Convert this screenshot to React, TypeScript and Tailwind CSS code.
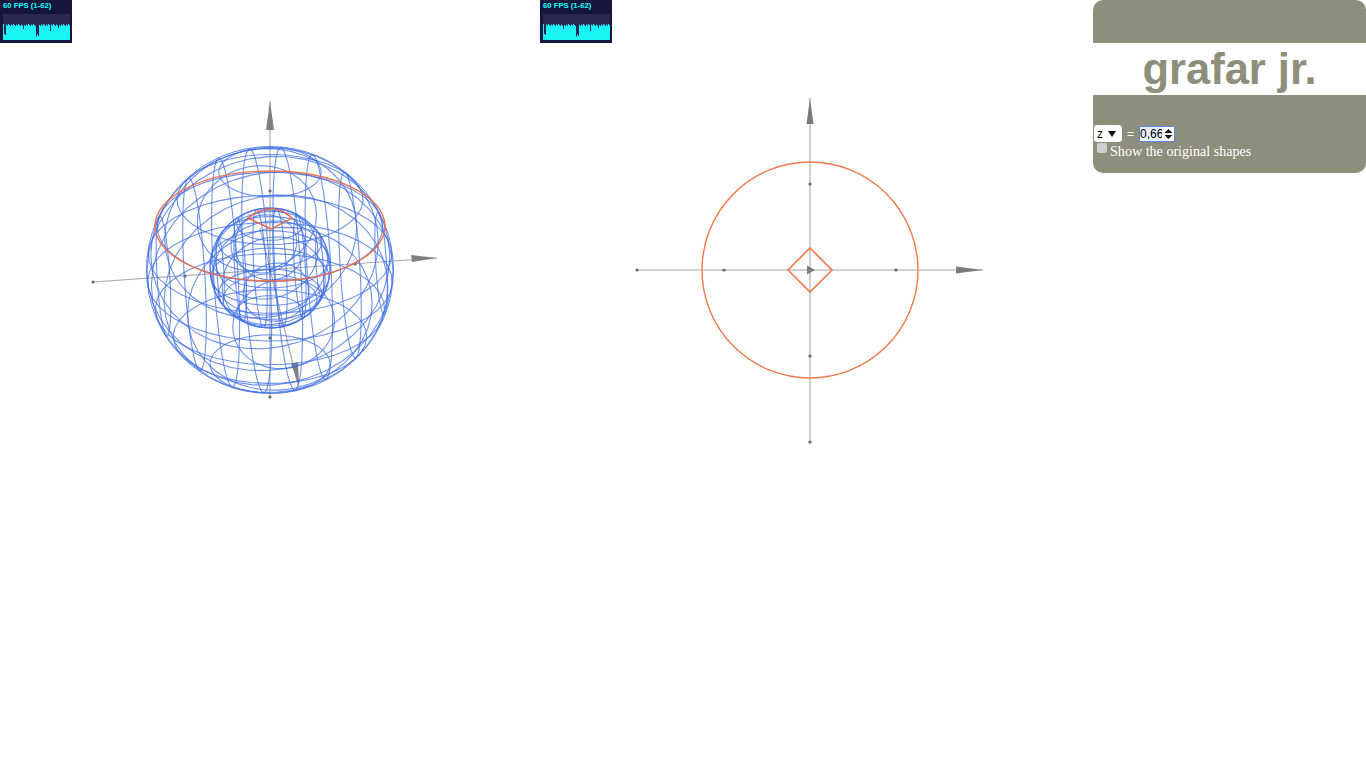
import React from "react";

const U = 87;
const A = (7 * Math.PI) / 180;
const E = (29 * Math.PI) / 180;

function proj(x: number, y: number, z: number): string {
  const sx = 270 + U * (x * Math.cos(A) + y * Math.sin(A));
  const sy = 270 + U * ((-x * Math.sin(A) + y * Math.cos(A)) * Math.sin(E) - z * Math.cos(E));
  return sx.toFixed(1) + " " + sy.toFixed(1);
}

function circle(fn: (a: number) => [number, number, number], n = 40): string {
  const pts: string[] = [];
  for (let i = 0; i <= n; i++) {
    const a = (i / n) * Math.PI * 2;
    const [x, y, z] = fn(a);
    pts.push(proj(x, y, z));
  }
  return "M" + pts.join("L");
}

function sphere(R: number, step: number): string[] {
  const out: string[] = [];
  for (let t = -R + step / 2; t < R; t += step) {
    const r = Math.sqrt(Math.max(R * R - t * t, 0));
    out.push(circle((a) => [t, r * Math.cos(a), r * Math.sin(a)]));
    out.push(circle((a) => [r * Math.cos(a), t, r * Math.sin(a)]));
    out.push(circle((a) => [r * Math.cos(a), r * Math.sin(a), t]));
  }
  return out;
}

const outer = sphere(Math.SQRT2, 0.36);
const inner = sphere(0.69, 0.23);

const bars = Array.from({ length: 67 }, (_, i) => {
  const dip =
    i === 33 || i === 35 ? 12 : i === 34 ? 9 : i === 20 || i === 47 ? 5 : i === 1 || i === 2 ? 9 : i === 55 ? 4 : 0;
  return 24 + dip + ((i * 7) % 5) * 0.5;
});

function Stats() {
  return (
    <div className="absolute left-0 top-0 h-[43px] w-[72px] bg-[#16163c] px-[3px] pt-[1px]">
      <div className="font-['Liberation_Sans',sans-serif] text-[7.7px] font-bold leading-[10px] text-[#1ff]">60 FPS (1-62)</div>
      <svg width="67" height="26" viewBox="0 14 67 26" className="mt-[3px] block bg-[#2a2850]">
        {bars.map((y, i) => (
          <rect key={i} x={i} y={y} width="1" height={40 - y} fill="#19f5f5" />
        ))}
      </svg>
    </div>
  );
}

function Dot({ x, y }: { x: number; y: number }) {
  return <circle cx={x} cy={y} r="1.6" fill="#666" />;
}

function View3D() {
  return (
    <svg width="540" height="540" viewBox="0 0 540 540" className="block">
      <g stroke="#aaa" strokeWidth="1.2" fill="none">
        <path d="M93 282L437 258" />
        <path d="M270 101V397" strokeWidth="1.6" stroke="#c4c4c4" />
        <path d="M260 228L298 385" />
      </g>
      <g fill="#7f7f7f">
        <polygon points="437,258 411,255 412,262" />
        <polygon points="270,101 266,130 274,130" />
        <polygon points="299,385 291,364 298,362" />
      </g>
      <Dot x={93} y={282} />
      <Dot x={185} y={276} />
      <Dot x={355} y={264} />
      <Dot x={270} y={191} />
      <Dot x={270} y={338} />
      <Dot x={270} y={397} />
      <Dot x={270} y={270} />
      <g fill="none" stroke="#3f6fe6" strokeWidth="1.1" strokeOpacity="0.75">
        {outer.map((d, i) => (
          <path key={i} d={d} />
        ))}
        {inner.map((d, i) => (
          <path key={i} d={d} transform="translate(0 -2)" />
        ))}
        <ellipse cx="270" cy="245" rx="35" ry="35" />
        <ellipse cx="270" cy="300" rx="47" ry="26" />
        <circle cx="270" cy="268" r="60" />
      </g>
      <circle cx="270" cy="270" r="123.5" fill="none" stroke="#3f6fe6" strokeWidth="1" strokeOpacity="0.8" />
      <g fill="none" stroke="#f0683f" strokeWidth="1.4">
        <ellipse cx="270" cy="226" rx="115" ry="55" strokeOpacity="0.9" />
        <path d="M248 218Q258 210 270 209T292 218L271 229Z" />
      </g>
    </svg>
  );
}

function View2D() {
  return (
    <svg width="540" height="540" viewBox="0 0 540 540" className="block">
      <path d="M97 270H443M270 98V442" stroke="#c4c4c4" strokeWidth="1.6" fill="none" />
      <g fill="#7c7c7c">
        <polygon points="443,270 416,266.5 416,273.5" />
        <polygon points="270,98 266.5,124 273.5,124" />
        <polygon points="275,270 267,265.5 267,274.5" />
      </g>
      <Dot x={97} y={270} />
      <Dot x={184} y={270} />
      <Dot x={356} y={270} />
      <Dot x={270} y={184} />
      <Dot x={270} y={356} />
      <Dot x={270} y={442} />
      <circle cx="270" cy="270" r="108" fill="none" stroke="#ee7a4c" strokeWidth="1.4" />
      <polygon points="270,248 292,270 270,292 248,270" fill="none" stroke="#ee7a4c" strokeWidth="1.6" />
    </svg>
  );
}

export default function App() {
  return (
    <div className="flex min-h-[768px] w-full bg-white">
      <div className="relative h-[540px] w-[540px]">
        <View3D />
        <Stats />
      </div>
      <div className="relative h-[540px] w-[540px]">
        <View2D />
        <Stats />
      </div>
      <div className="ml-auto flex h-[173px] w-[273px] flex-col">
        <div className="h-[43px] rounded-t-[10px] bg-[#8e8e7c]" />
        <div className="h-[52px] text-center font-['Liberation_Sans',sans-serif] text-[43.5px] font-bold leading-[52px] text-[#8e8e7c]">
          grafar jr.
        </div>
        <div className="flex flex-1 flex-col rounded-b-[10px] bg-[#8e8e7c] pl-[1px] pt-[30px]">
          <div className="flex h-[17px] items-center font-['Liberation_Sans',sans-serif] text-[12px] text-black">
            <div className="flex h-[17px] w-[28px] items-center justify-between rounded-[3px] bg-white pl-[3px] pr-[6px]">
              <span>z</span>
              <svg width="8" height="6" viewBox="0 0 8 6"><polygon points="0,0 8,0 4,6" fill="#111" /></svg>
            </div>
            <span className="ml-[5px] w-[12px] text-white">=</span>
            <div className="flex h-[16px] w-[36px] items-center overflow-hidden border border-[#5b86e5] bg-[#e8f0fe]">
              <span className="w-[22px] overflow-hidden whitespace-nowrap text-[12px] leading-[14px]">0,66</span>
              <div className="flex h-full flex-1 flex-col items-center justify-center gap-[2px] bg-white">
                <svg width="9" height="4" viewBox="0 0 8 4"><polygon points="4,0 8,4 0,4" fill="#111" /></svg>
                <svg width="9" height="4" viewBox="0 0 8 4"><polygon points="0,0 8,0 4,4" fill="#111" /></svg>
              </div>
            </div>
          </div>
          <div className="flex items-start font-['Liberation_Serif',serif] text-[14.1px] leading-[18px] text-white">
            <div className="ml-[3px] mt-[1px] h-[10px] w-[10px] rounded-[2px] bg-[#cfcfcf]" />
            <span className="ml-[3px]">Show the original shapes</span>
          </div>
        </div>
      </div>
    </div>
  );
}
